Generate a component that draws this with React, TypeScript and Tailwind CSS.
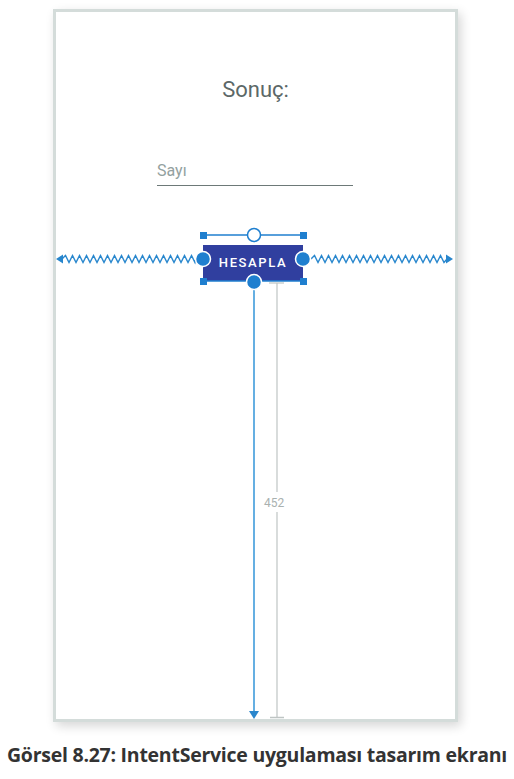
import React from "react";

const HANDLE = "#1f7fcf";
const ZIG = "#2786cd";
const GUIDE = "#3f9bdb";
const GRAY = "#bfc5c4";

// zigzag "spring" between two x positions on one row
function zigzag(x0: number, x1: number, y: number, amp = 3.5, step = 3.5) {
  const pts: string[] = [`${x0},${y}`];
  let up = true;
  for (let x = x0 + step; x < x1; x += step) {
    pts.push(`${x},${y + (up ? -amp : amp)}`);
    up = !up;
  }
  pts.push(`${x1},${y}`);
  return pts.join(" ");
}

function Constraints() {
  // coordinates are inside the white canvas (399 x 707)
  const cy = 247;
  return (
    <svg
      className="absolute inset-0 pointer-events-none"
      width="399"
      height="707"
      viewBox="0 0 399 707"
      aria-hidden="true"
    >
      {/* horizontal springs */}
      <polyline points={zigzag(6, 140, cy)} fill="none" stroke={ZIG} strokeWidth="1.4" />
      <polygon points={`0,${cy} 7,${cy - 4.5} 7,${cy + 4.5}`} fill={ZIG} />
      <polyline points={zigzag(255, 391, cy)} fill="none" stroke={ZIG} strokeWidth="1.4" />
      <polygon points={`397,${cy} 390,${cy - 4.5} 390,${cy + 4.5}`} fill={ZIG} />

      {/* gray dimension line */}
      <line x1="213" y1="271" x2="228" y2="271" stroke={GRAY} strokeWidth="1.2" />
      <line x1="221" y1="271" x2="221" y2="480" stroke={GRAY} strokeWidth="1.2" />
      <line x1="221" y1="500" x2="221" y2="705" stroke={GRAY} strokeWidth="1.2" />
      <line x1="214" y1="705.5" x2="228" y2="705.5" stroke={GRAY} strokeWidth="1.5" />

      {/* vertical blue guide to bottom */}
      <line x1="198" y1="275" x2="198" y2="700" stroke={GUIDE} strokeWidth="1.6" />
      <polygon points="193,699 203,699 198,707" fill="#2a86cc" />

      {/* selection outline */}
      <line x1="147" y1="223" x2="247" y2="223" stroke={HANDLE} strokeWidth="1.3" />
      <line x1="147" y1="269" x2="247" y2="269" stroke={HANDLE} strokeWidth="1.3" />

      {/* corner handles */}
      <rect x="144" y="220" width="7" height="7" fill={HANDLE} />
      <rect x="244" y="220" width="7" height="7" fill={HANDLE} />
      <rect x="144" y="266" width="7" height="7" fill={HANDLE} />
      <rect x="244" y="266" width="7" height="7" fill={HANDLE} />

      {/* anchors */}
      <circle cx="198" cy="223" r="6.5" fill="#fff" stroke={HANDLE} strokeWidth="1.5" />
      <circle cx="198" cy="270" r="7.5" fill={HANDLE} stroke="#fff" strokeWidth="1.5" />
      <circle cx="147" cy={cy} r="7.5" fill={HANDLE} stroke="#fff" strokeWidth="1.5" />
      <circle cx="247" cy={cy} r="7.5" fill={HANDLE} stroke="#fff" strokeWidth="1.5" />
    </svg>
  );
}

export default function App() {
  return (
    <div className="w-[514px] h-[779px] bg-white flex flex-col font-['Roboto',sans-serif]">
      <div className="ml-[53px] mt-[9px] w-[405px] h-[713px] border-[3px] border-[#d4dcda] shadow-[3px_4px_10px_rgba(0,0,0,0.16)] bg-white">
        <div className="relative w-[399px] h-[707px] flex flex-col">
          <p className="mt-[65px] text-center text-[22px] leading-[26px] text-[#5c6867]">Sonuç:</p>

          <div className="mt-[56px] ml-[101px] w-[196px] border-b-[1.5px] border-[#6d7978] pb-[2px]">
            <span className="text-[16px] leading-[19px] text-[#93a1a0]">Sayı</span>
          </div>

          <div className="mt-[59px] ml-[147px] w-[100px] h-[36px] bg-[#303f9f] flex items-center justify-center">
            <span className="text-[13px] font-medium tracking-[1.6px] text-white">HESAPLA</span>
          </div>

          <span className="absolute left-[208px] top-[484px] text-[12px] leading-[14px] text-[#a9b1b0]">452</span>

          <Constraints />
        </div>
      </div>

      <p className="mt-[21px] text-center text-[19.5px] leading-[24px] font-bold tracking-[-0.25px] text-[#333] font-['Open_Sans',sans-serif]">
        Görsel 8.27: IntentService uygulaması tasarım ekranı
      </p>
    </div>
  );
}
